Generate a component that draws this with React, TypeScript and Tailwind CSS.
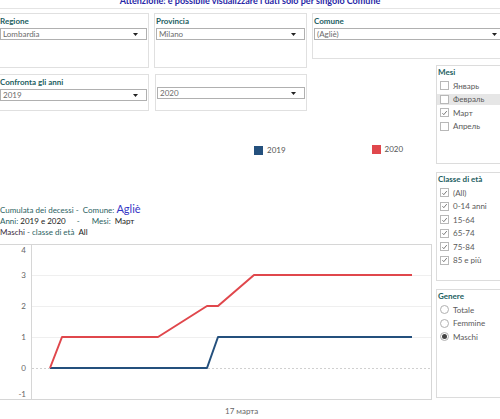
import React from "react";

const Arrow = () => (
  <svg width="5" height="3" viewBox="0 0 5 3" className="shrink-0">
    <path d="M0 0 L5 0 L2.5 3 Z" fill="#222" />
  </svg>
);

function Dropdown({ value }: { value: string }) {
  return (
    <div className="h-[12px] border border-[#b0b0b0] bg-white flex items-center pl-[2px] pr-[8px] justify-between">
      <span className="text-[8px] leading-[10px] text-[#6b6b6b]">{value}</span>
      <Arrow />
    </div>
  );
}

function FilterPanel({
  label,
  value,
  className,
}: {
  label?: string;
  value: string;
  className: string;
}) {
  return (
    <div className={`shrink-0 border border-[#e0e0e0] px-[1px] pt-[2px] ${className}`}>
      <div className="h-[10px] leading-[10px] text-[8px] font-bold text-[#22605f] whitespace-nowrap">
        {label ?? ""}
      </div>
      {label ? <div className="h-[2px]" /> : null}
      <Dropdown value={value} />
    </div>
  );
}

const Check = () => (
  <svg width="8" height="8" viewBox="0 0 8 8">
    <path d="M1.6 4.2 L3.2 5.9 L6.6 1.8" fill="none" stroke="#555" strokeWidth="0.9" />
  </svg>
);

function CheckRow({ text, checked, hl }: { text: string; checked?: boolean; hl?: boolean }) {
  return (
    <div className="h-[13.5px] flex items-center">
      <div className={`h-[11px] w-full flex items-center pl-[3px] gap-[4px] ${hl ? "bg-[#e6e6e6]" : ""}`}>
        <div className="w-[9px] h-[9px] border border-[#b8b8b8] bg-white flex items-center justify-center shrink-0">
          {checked ? <Check /> : null}
        </div>
        <span className="text-[8px] leading-[10px] text-[#5a5a5a] whitespace-nowrap">{text}</span>
      </div>
    </div>
  );
}

function RadioRow({ text, on }: { text: string; on?: boolean }) {
  return (
    <div className="h-[13.5px] flex items-center pl-[3px] gap-[4px]">
      <div className="w-[9px] h-[9px] rounded-full border border-[#b0b0b0] bg-white flex items-center justify-center shrink-0">
        {on ? <div className="w-[5px] h-[5px] rounded-full bg-[#444]" /> : null}
      </div>
      <span className="text-[8px] leading-[10px] text-[#5a5a5a] whitespace-nowrap">{text}</span>
    </div>
  );
}

function SidePanel({ label, h, children }: { label: string; h: string; children: React.ReactNode }) {
  return (
    <div className={`border border-[#dcdcdc] w-[70px] pt-[1px] ${h}`}>
      <div className="h-[10px] leading-[10px] text-[8px] font-bold text-[#22605f] pl-[1px] whitespace-nowrap">{label}</div>
      <div className="mt-[2px]">{children}</div>
    </div>
  );
}

function Chart() {
  const red = "50,124 62,93 158,93 207,62 218,62 254,31 412,31";
  const blue = "50,124 207,124 218,93 412,93";
  return (
    <svg width="432" height="157" viewBox="0 0 432 157" className="block">
      <line x1="0" y1="0.5" x2="432" y2="0.5" stroke="#d6d6d6" />
      <line x1="0" y1="155.5" x2="432" y2="155.5" stroke="#d6d6d6" />
      <line x1="431.5" y1="0" x2="431.5" y2="156" stroke="#d6d6d6" />
      <line x1="31.5" y1="0" x2="31.5" y2="156" stroke="#d6d6d6" />
      {[31.5, 62.5, 93.5].map((y) => (
        <line key={y} x1="32" y1={y} x2="431" y2={y} stroke="#efefef" />
      ))}
      <line x1="32" y1="124.5" x2="431" y2="124.5" stroke="#d0d0d0" strokeDasharray="2 2" />
      <g fontSize="8" fill="#666" fontFamily="Lato, sans-serif" textAnchor="end">
        <text x="26" y="9">4</text>
        <text x="26" y="34">3</text>
        <text x="26" y="65">2</text>
        <text x="26" y="96">1</text>
        <text x="26" y="127">0</text>
        <text x="26" y="153">-1</text>
      </g>
      <polyline points={blue} fill="none" stroke="#24507d" strokeWidth="2" strokeLinejoin="round" />
      <polyline points={red} fill="none" stroke="#e0474c" strokeWidth="2" strokeLinejoin="round" />
    </svg>
  );
}

export default function App() {
  return (
    <div className="w-[500px] h-[419px] overflow-hidden bg-white font-[Lato,sans-serif]">
      <div className="h-[9px] border-b border-[#e4e4e4] overflow-hidden">
        <div className="-mt-[5px] text-center text-[9px] leading-[11px] font-bold text-[#2727a6] whitespace-nowrap">
          Attenzione: è possibile visualizzare i dati solo per singolo Comune
        </div>
      </div>
      <div className="mt-[4px] flex items-start">
        <FilterPanel label="Regione" value="Lombardia" className="-ml-[2px] w-[151px] h-[55px]" />
        <FilterPanel label="Provincia" value="Milano" className="ml-[5px] w-[153px] h-[55px]" />
        <FilterPanel label="Comune" value="(Agliè)" className="ml-[5px] w-[196px] h-[46px]" />
      </div>
      <div className="flex items-start">
        <div className="w-[432px] shrink-0">
          <div className="mt-[6px] flex items-start">
            <FilterPanel label="Confronta gli anni" value="2019" className="-ml-[2px] w-[151px] h-[37px]" />
            <div className="shrink-0 ml-[6px] w-[152px] h-[37px] border border-[#e0e0e0] px-[1px] pt-[12px]">
              <Dropdown value="2020" />
            </div>
          </div>
          <div className="mt-[33px] h-[12px] flex items-center text-[8px] text-[#555]">
            <div className="ml-[254px] w-[9px] h-[9px] bg-[#24507d]" />
            <span className="ml-[4px]">2019</span>
            <div className="ml-[86px] w-[9px] h-[9px] bg-[#e0474c] -mt-[2px]" />
            <span className="ml-[4px] -mt-[2px]">2020</span>
          </div>
          <div className="mt-[46px] text-[8px] text-[#2c5f5f] whitespace-nowrap">
            <div className="h-[13px] leading-[13px]">
              Cumulata dei decessi - &nbsp;Comune: <span className="text-[11px] text-[#3535c4]">Agliè</span>
            </div>
            <div className="h-[12px] leading-[12px]">
              Anni: <span className="text-[#222]">2019 e 2020</span>
              <span className="ml-[11px]">-</span>
              <span className="ml-[12px]">Mesi:</span>
              <span className="ml-[4px] text-[#222]">Март</span>
            </div>
            <div className="h-[11px] leading-[11px]">
              <span className="text-[#3a2a3a]">Maschi</span> - classe di età <span className="ml-[2px] text-[#222]">All</span>
            </div>
          </div>
          <div className="mt-[6px]">
            <Chart />
          </div>
          <div className="mt-[5px] pl-[225px] text-[8px] leading-[10px] text-[#666]">17 марта</div>
        </div>
        <div className="ml-[4px] -mt-[3px] flex flex-col gap-[8px]">
          <SidePanel label="Mesi" h="h-[99px]">
            <CheckRow text="Январь" />
            <CheckRow text="Февраль" hl />
            <CheckRow text="Март" checked />
            <CheckRow text="Апрель" />
          </SidePanel>
          <SidePanel label="Classe di età" h="h-[109px]">
            <CheckRow text="(All)" checked />
            <CheckRow text="0-14 anni" checked />
            <CheckRow text="15-64" checked />
            <CheckRow text="65-74" checked />
            <CheckRow text="75-84" checked />
            <CheckRow text="85 e più" checked />
          </SidePanel>
          <SidePanel label="Genere" h="h-[109px]">
            <RadioRow text="Totale" />
            <RadioRow text="Femmine" />
            <RadioRow text="Maschi" on />
          </SidePanel>
        </div>
      </div>
    </div>
  );
}
